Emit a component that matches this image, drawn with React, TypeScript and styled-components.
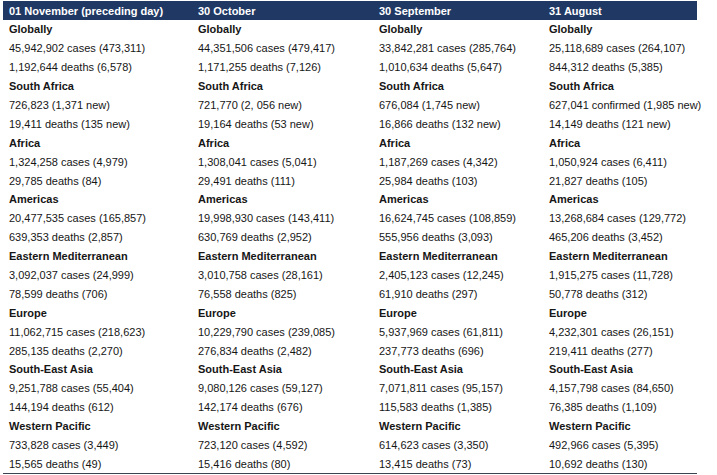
import styled, { createGlobalStyle } from "styled-components";

const GlobalStyle = createGlobalStyle`
  html, body {
    margin: 0;
    padding: 0;
    background: #fff;
  }
`;

const Page = styled.div`
  padding: 1px 0 0 3px;
  font-family: "Liberation Sans", Arial, sans-serif;
  font-size: 11px;
  color: #161616;
`;

const Table = styled.table`
  width: 694px;
  table-layout: fixed;
  border-collapse: collapse;
  border-bottom: 1.5px solid #3a4150;
`;

const HeadCell = styled.th<{ $w: number }>`
  box-sizing: border-box;
  width: ${(p) => p.$w}px;
  height: 19px;
  padding: 0 0 0 6px;
  background: #1f3864;
  color: #fff;
  font-weight: 700;
  text-align: left;
  white-space: nowrap;
`;

const Cell = styled.td<{ $bold?: boolean }>`
  height: 18.9px;
  padding: 0 0 0 6px;
  font-weight: ${(p) => (p.$bold ? 700 : 400)};
  white-space: nowrap;
  overflow: visible;
  vertical-align: middle;
`;

const regions = [
  "Globally",
  "South Africa",
  "Africa",
  "Americas",
  "Eastern Mediterranean",
  "Europe",
  "South-East Asia",
  "Western Pacific",
];

const columns = [
  {
    title: "01 November (preceding day)",
    width: 189,
    lines: [
      "45,942,902 cases (473,311)",
      "1,192,644 deaths (6,578)",
      "726,823 (1,371 new)",
      "19,411 deaths (135 new)",
      "1,324,258 cases (4,979)",
      "29,785 deaths (84)",
      "20,477,535 cases (165,857)",
      "639,353 deaths (2,857)",
      "3,092,037 cases (24,999)",
      "78,599 deaths (706)",
      "11,062,715 cases (218,623)",
      "285,135 deaths (2,270)",
      "9,251,788 cases (55,404)",
      "144,194 deaths (612)",
      "733,828 cases (3,449)",
      "15,565 deaths (49)",
    ],
  },
  {
    title: "30 October",
    width: 181,
    lines: [
      "44,351,506 cases (479,417)",
      "1,171,255 deaths (7,126)",
      "721,770 (2, 056 new)",
      "19,164 deaths (53 new)",
      "1,308,041 cases (5,041)",
      "29,491 deaths (111)",
      "19,998,930 cases (143,411)",
      "630,769 deaths (2,952)",
      "3,010,758 cases (28,161)",
      "76,558 deaths (825)",
      "10,229,790 cases (239,085)",
      "276,834 deaths (2,482)",
      "9,080,126 cases (59,127)",
      "142,174 deaths (676)",
      "723,120 cases (4,592)",
      "15,416 deaths (80)",
    ],
  },
  {
    title: "30 September",
    width: 170,
    lines: [
      "33,842,281 cases (285,764)",
      "1,010,634 deaths (5,647)",
      "676,084 (1,745 new)",
      "16,866 deaths (132 new)",
      "1,187,269 cases (4,342)",
      "25,984 deaths (103)",
      "16,624,745 cases (108,859)",
      "555,956 deaths (3,093)",
      "2,405,123 cases (12,245)",
      "61,910 deaths (297)",
      "5,937,969 cases (61,811)",
      "237,773 deaths (696)",
      "7,071,811 cases (95,157)",
      "115,583 deaths (1,385)",
      "614,623 cases (3,350)",
      "13,415 deaths (73)",
    ],
  },
  {
    title: "31 August",
    width: 154,
    lines: [
      "25,118,689 cases (264,107)",
      "844,312 deaths (5,385)",
      "627,041 confirmed (1,985 new)",
      "14,149 deaths (121 new)",
      "1,050,924 cases (6,411)",
      "21,827 deaths (105)",
      "13,268,684 cases (129,772)",
      "465,206 deaths (3,452)",
      "1,915,275 cases (11,728)",
      "50,778 deaths (312)",
      "4,232,301 cases (26,151)",
      "219,411 deaths (277)",
      "4,157,798 cases (84,650)",
      "76,385 deaths (1,109)",
      "492,966 cases (5,395)",
      "10,692 deaths (130)",
    ],
  },
];

type Row = { bold: boolean; cells: string[] };

const rows: Row[] = regions.flatMap((region, r) => [
  { bold: true, cells: columns.map(() => region) },
  { bold: false, cells: columns.map((c) => c.lines[r * 2]) },
  { bold: false, cells: columns.map((c) => c.lines[r * 2 + 1]) },
]);

const App = () => {
  return (
    <Page>
      <GlobalStyle />
      <Table>
        <thead>
          <tr>
            {columns.map((c) => (
              <HeadCell key={c.title} $w={c.width}>
                {c.title}
              </HeadCell>
            ))}
          </tr>
        </thead>
        <tbody>
          {rows.map((row, i) => (
            <tr key={i}>
              {row.cells.map((text, j) => (
                <Cell key={j} $bold={row.bold}>
                  {text}
                </Cell>
              ))}
            </tr>
          ))}
        </tbody>
      </Table>
    </Page>
  );
};

export default App;
